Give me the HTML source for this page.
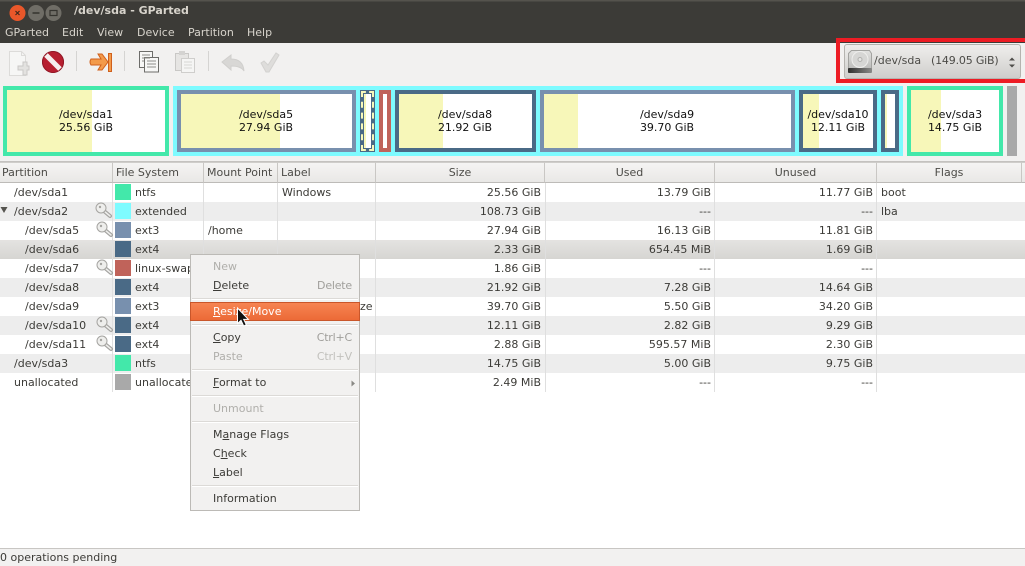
<!DOCTYPE html>
<html><head><meta charset="utf-8"><title>/dev/sda - GParted</title>
<style>
html,body{margin:0;padding:0}
body{width:1025px;height:566px;overflow:hidden;position:relative;background:#fff;font:11px/14px "DejaVu Sans",sans-serif;color:#3c3b37}
div,span{position:absolute;white-space:nowrap;box-sizing:border-box}
u{text-decoration:underline}
#title{left:0;top:0;width:1025px;height:21px;background:linear-gradient(#55534d 0,#55534d 1px,#3c3b37 2px,#3c3b37 100%)}
#menubar{left:0;top:21px;width:1025px;height:22px;background:#3c3b37}
#menubar span{top:5px;color:#d8d4cc}
#tool{left:0;top:43px;width:1025px;height:118px;background:#f2f1f0}
.p{top:86px;height:70px;border:4px solid}
.p i{position:absolute;left:0;top:0;bottom:0;background:#f7f7b9}
.g{background:#fff}
.t{color:#111;text-align:center;line-height:13px;z-index:3}
.r{left:0;width:1025px;height:19px}
.r span{top:3px}
.s{left:115px;top:1px!important;width:16px;height:16px}
.sz{text-align:right}
.h{top:162px;height:21px;background:linear-gradient(#f5f4f3,#e9e8e6);border-top:1px solid #cfcdca;border-bottom:1px solid #bdbbb8;border-right:1px solid #c9c7c4;padding-top:3px;color:#4c4b47}
.v{top:183px;width:1px;height:209px;background:#dfdfdf}
#menu{left:190px;top:254px;width:170px;height:257px;background:#f2f1f0;border:1px solid #bcbab6;z-index:5}
#menu span{left:22px;margin-top:1px}
#menu .k{left:auto;right:7px;color:#a09f9b;letter-spacing:-.2px}
#menu .d{color:#b0afab}
#menu b{position:absolute;left:1px;right:1px;height:2px;background:linear-gradient(#dcdad7 50%,#fff 50%)}
svg{position:absolute;overflow:visible}
</style></head><body>
<div id="title">
<span style="left:74px;top:4px;color:#d8d4cc;font-weight:bold;font-size:11px">/dev/sda - GParted</span>
</div>
<div id="menubar"><span style="left:5px">GParted</span><span style="left:62px">Edit</span><span style="left:97px">View</span><span style="left:137px">Device</span><span style="left:188px">Partition</span><span style="left:247px">Help</span></div>
<svg style="left:10px;top:5px;z-index:2" width="52" height="16"><circle cx="7.500" cy="8" r="8" fill="#e9572a"/><path d="M5.500 6l4 4M9.500 6l-4 4" stroke="#40281c" stroke-width="1.200"/><circle cx="26" cy="8" r="8" fill="#6f6d66"/><path d="M22.500 8h7" stroke="#35342f" stroke-width="1.500"/><circle cx="43.500" cy="8" r="8" fill="#6f6d66"/><rect x="40" y="5.500" width="7" height="5" fill="none" stroke="#35342f" stroke-width="1.200"/></svg>
<div id="tool"></div>
<svg style="left:0;top:43px" width="300" height="40">
<path d="M9.500 8.500h12l4 4v20h-16z" fill="#f6f6f5" stroke="#dcdbd9"/><path d="M21.500 8.500v4h4" fill="none" stroke="#dcdbd9"/><path d="M18 23h5v-4h4v4h2v4h-2v5h-4v-5h-5z" fill="#e3e2e0" stroke="#c9c8c6"/>
<circle cx="53" cy="19" r="11" fill="#b71f30"/><circle cx="53" cy="19" r="10.500" fill="none" stroke="#8f1826" stroke-width="1"/><path d="M46 12l14 14" stroke="#f6eeee" stroke-width="5"/>
<path d="M76.500 8v20" stroke="#d5d4d2"/>
<path d="M91 16h10l-3-5h4l6 8-6 8h-4l3-5H91q-2-3 0-6z" fill="#f39a4a" stroke="#d0601c"/><rect x="108.500" y="10.500" width="3" height="18" fill="#f39a4a" stroke="#d0601c"/>
<path d="M124.500 8v20" stroke="#d5d4d2"/>
<rect x="139.500" y="8.500" width="13" height="16" fill="#f7f7f6" stroke="#6d6d6a"/><rect x="144.500" y="14.500" width="14" height="14.500" fill="#f7f7f6" stroke="#6d6d6a"/><path d="M142 12h8M142 15h8M142 18h2M147 18h9M147 21h9M147 24h9" stroke="#8e8e8b"/>
<rect x="175.500" y="10.500" width="13" height="17" fill="#e6e5e3" stroke="#c9c8c6"/><rect x="179" y="8" width="6" height="4" fill="#d4d3d1"/><rect x="181.500" y="15.500" width="13" height="14" fill="#f5f5f4" stroke="#cfcecc"/><path d="M184 19h8M184 22h8M184 25h8" stroke="#d8d7d5"/>
<path d="M208.500 8v20" stroke="#d5d4d2"/>
<path d="M222 19l9-7v4q12 0 13 12-3-5-13-5v4z" fill="#d8d7d5" stroke="#d0cfcd"/>
<path d="M261 20l3-2 4 4 8-12 3 2-10 17h-3z" fill="#dedddb" stroke="#d3d2d0"/>
</svg>

<div style="left:836px;top:38px;width:189px;height:45px;border:4px solid #ed1c24;border-right:none;z-index:2"></div>
<div style="left:844px;top:44px;width:177px;height:35px;border:1px solid #b5b3af;border-radius:3px;background:linear-gradient(#efeeed,#cfcecc);z-index:3"></div>
<svg style="left:848px;top:50px;z-index:4" width="24" height="23"><defs><linearGradient id="st" x1="0" x2="1" y1="0" y2="0"><stop offset="0" stop-color="#2e2e2d"/><stop offset="1" stop-color="#8a8a88"/></linearGradient><linearGradient id="bd" x1="0" x2="0" y1="0" y2="1"><stop offset="0" stop-color="#e2e2e0"/><stop offset="1" stop-color="#bdbdbb"/></linearGradient></defs><path d="M3.500 .5h18l2 3v15H.500v-15z" fill="url(#bd)" stroke="#a3a3a0"/><circle cx="12" cy="9.500" r="8" fill="#d6d6d4" stroke="#eeeeec"/><circle cx="12" cy="9.500" r="2" fill="#e6e6e4" stroke="#b0b0ad"/><rect x="0" y="18" width="24" height="5" rx="1" fill="url(#st)"/></svg>
<span style="left:874px;top:54px;z-index:4;color:#4c4b47">/dev/sda</span><span style="left:931px;top:54px;z-index:4;color:#4c4b47;letter-spacing:-.18px">(149.05 GiB)</span>
<svg style="left:1007px;top:57px;z-index:4" width="10" height="12"><path d="M2 3.500L5 .5 8 3.500zM2 7.500L5 10.500 8 7.500z" fill="#4f4e4b"/></svg>

<!-- graph -->
<div class="p g" style="left:3px;width:166px;border-color:#43e8aa"><i style="width:85px"></i></div>
<div style="left:173px;top:86px;width:730px;height:70px;background:#7efbff"></div>
<div class="p g" style="left:177px;top:90px;height:62px;width:179px;border-color:#7890ae"><i style="width:99px"></i></div>
<div class="p" style="left:360px;top:90px;height:62px;width:15px;border-color:#4a6a86;background:#fff"><i style="width:2px;background:#f7f7b9"></i></div>
<div style="left:361px;top:91px;width:13px;height:60px;border:2px dashed #f7f7b9"></div>
<div class="p g" style="left:379px;top:90px;height:62px;width:12px;border-color:#c0635a"></div>
<div class="p g" style="left:395px;top:90px;height:62px;width:141px;border-color:#4a6a86"><i style="width:44px"></i></div>
<div class="p g" style="left:540px;top:90px;height:62px;width:255px;border-color:#7890ae"><i style="width:34px"></i></div>
<div class="p g" style="left:799px;top:90px;height:62px;width:78px;border-color:#4a6a86"><i style="width:16px"></i></div>
<div class="p g" style="left:881px;top:90px;height:62px;width:18px;border-color:#4a6a86"><i style="width:2px"></i></div>
<div class="p g" style="left:907px;width:96px;border-color:#43e8aa"><i style="width:30px"></i></div>
<div style="left:1007px;top:86px;width:10px;height:70px;background:#a9a9a9"></div>
<div class="t" style="left:3px;width:166px;top:108px">/dev/sda1<br>25.56 GiB</div>
<div class="t" style="left:177px;width:178px;top:108px">/dev/sda5<br>27.94 GiB</div>
<div class="t" style="left:395px;width:140px;top:108px">/dev/sda8<br>21.92 GiB</div>
<div class="t" style="left:540px;width:254px;top:108px">/dev/sda9<br>39.70 GiB</div>
<div class="t" style="left:799px;width:78px;top:108px">/dev/sda10<br>12.11 GiB</div>
<div class="t" style="left:907px;width:96px;top:108px">/dev/sda3<br>14.75 GiB</div>
<div style="left:0;top:161px;width:1025px;height:1px;background:#c4c2bf"></div>

<!-- header -->
<div class="h" style="left:0;width:113px;padding-left:2px">Partition</div>
<div class="h" style="left:113px;width:91px;padding-left:3px">File System</div>
<div class="h" style="left:204px;width:74px;padding-left:3px">Mount Point</div>
<div class="h" style="left:278px;width:98px;padding-left:3px">Label</div>
<div class="h" style="left:376px;width:169px;text-align:center">Size</div>
<div class="h" style="left:545px;width:170px;text-align:center">Used</div>
<div class="h" style="left:715px;width:162px;text-align:center">Unused</div>
<div class="h" style="left:877px;width:145px;text-align:center">Flags</div>
<div class="h" style="left:1022px;width:3px;border-right:none"></div>

<!-- rows -->
<div class="r" style="top:183px"><span style="left:14px">/dev/sda1</span><span class="s" style="background:#43e8aa"></span><span style="left:135px">ntfs</span><span style="left:282px">Windows</span><span class="sz" style="right:484px">25.56 GiB</span><span class="sz" style="right:314px">13.79 GiB</span><span class="sz" style="right:152px">11.77 GiB</span><span style="left:881px">boot</span></div>
<div class="r" style="top:202px;background:#ededed"><span style="left:14px">/dev/sda2</span><span class="s" style="background:#7efbff"></span><span style="left:135px">extended</span><span class="sz" style="right:484px">108.73 GiB</span><span class="sz" style="right:314px">---</span><span class="sz" style="right:152px">---</span><span style="left:881px">lba</span></div>
<div class="r" style="top:221px"><span style="left:25px">/dev/sda5</span><span class="s" style="background:#7890ae"></span><span style="left:135px">ext3</span><span style="left:208px">/home</span><span class="sz" style="right:484px">27.94 GiB</span><span class="sz" style="right:314px">16.13 GiB</span><span class="sz" style="right:152px">11.81 GiB</span></div>
<div class="r" style="top:240px;background:linear-gradient(#e4e3e1,#d6d5d2)"><span style="left:25px">/dev/sda6</span><span class="s" style="background:#4a6a86"></span><span style="left:135px">ext4</span><span class="sz" style="right:484px">2.33 GiB</span><span class="sz" style="right:314px">654.45 MiB</span><span class="sz" style="right:152px">1.69 GiB</span></div>
<div class="r" style="top:259px"><span style="left:25px">/dev/sda7</span><span class="s" style="background:#c0635a"></span><span style="left:135px">linux-swap</span><span class="sz" style="right:484px">1.86 GiB</span><span class="sz" style="right:314px">---</span><span class="sz" style="right:152px">---</span></div>
<div class="r" style="top:278px;background:#ededed"><span style="left:25px">/dev/sda8</span><span class="s" style="background:#4a6a86"></span><span style="left:135px">ext4</span><span class="sz" style="right:484px">21.92 GiB</span><span class="sz" style="right:314px">7.28 GiB</span><span class="sz" style="right:152px">14.64 GiB</span></div>
<div class="r" style="top:297px"><span style="left:25px">/dev/sda9</span><span class="s" style="background:#7890ae"></span><span style="left:135px">ext3</span><span style="left:360px">ze</span><span class="sz" style="right:484px">39.70 GiB</span><span class="sz" style="right:314px">5.50 GiB</span><span class="sz" style="right:152px">34.20 GiB</span></div>
<div class="r" style="top:316px;background:#ededed"><span style="left:25px">/dev/sda10</span><span class="s" style="background:#4a6a86"></span><span style="left:135px">ext4</span><span class="sz" style="right:484px">12.11 GiB</span><span class="sz" style="right:314px">2.82 GiB</span><span class="sz" style="right:152px">9.29 GiB</span></div>
<div class="r" style="top:335px"><span style="left:25px">/dev/sda11</span><span class="s" style="background:#4a6a86"></span><span style="left:135px">ext4</span><span class="sz" style="right:484px">2.88 GiB</span><span class="sz" style="right:314px">595.57 MiB</span><span class="sz" style="right:152px">2.30 GiB</span></div>
<div class="r" style="top:354px;background:#ededed"><span style="left:14px">/dev/sda3</span><span class="s" style="background:#43e8aa"></span><span style="left:135px">ntfs</span><span class="sz" style="right:484px">14.75 GiB</span><span class="sz" style="right:314px">5.00 GiB</span><span class="sz" style="right:152px">9.75 GiB</span></div>
<div class="r" style="top:373px"><span style="left:14px">unallocated</span><span class="s" style="background:#a9a9a9"></span><span style="left:135px">unallocated</span><span class="sz" style="right:484px">2.49 MiB</span><span class="sz" style="right:314px">---</span><span class="sz" style="right:152px">---</span></div>
<div class="v" style="left:112px"></div><div class="v" style="left:203px"></div><div class="v" style="left:277px"></div><div class="v" style="left:375px"></div><div class="v" style="left:545px"></div><div class="v" style="left:714px"></div><div class="v" style="left:876px"></div>

<svg style="left:0;top:183px" width="112" height="170">
<path d="M.5 24h7l-3.500 6z" fill="#55544f"/>
<g id="k1"><path d="M104 28l6 5" stroke="#a5a4a1" stroke-width="4" stroke-linecap="round"/><path d="M104 28l6 5" stroke="#eeeeec" stroke-width="1.500" stroke-linecap="round"/><circle cx="101" cy="25" r="5" fill="#eeeeec" stroke="#a5a4a1"/><circle cx="100" cy="24" r="1.200" fill="#a5a4a1"/></g>
<g><path d="M105 47l6 5" stroke="#a5a4a1" stroke-width="4" stroke-linecap="round"/><path d="M105 47l6 5" stroke="#eeeeec" stroke-width="1.500" stroke-linecap="round"/><circle cx="102" cy="44" r="5" fill="#eeeeec" stroke="#a5a4a1"/><circle cx="101" cy="43" r="1.200" fill="#a5a4a1"/></g>
<g><path d="M105 85l6 5" stroke="#a5a4a1" stroke-width="4" stroke-linecap="round"/><path d="M105 85l6 5" stroke="#eeeeec" stroke-width="1.500" stroke-linecap="round"/><circle cx="102" cy="82" r="5" fill="#eeeeec" stroke="#a5a4a1"/><circle cx="101" cy="81" r="1.200" fill="#a5a4a1"/></g>
<g><path d="M105 142l6 5" stroke="#a5a4a1" stroke-width="4" stroke-linecap="round"/><path d="M105 142l6 5" stroke="#eeeeec" stroke-width="1.500" stroke-linecap="round"/><circle cx="102" cy="139" r="5" fill="#eeeeec" stroke="#a5a4a1"/><circle cx="101" cy="138" r="1.200" fill="#a5a4a1"/></g>
<g><path d="M105 161l6 5" stroke="#a5a4a1" stroke-width="4" stroke-linecap="round"/><path d="M105 161l6 5" stroke="#eeeeec" stroke-width="1.500" stroke-linecap="round"/><circle cx="102" cy="158" r="5" fill="#eeeeec" stroke="#a5a4a1"/><circle cx="101" cy="157" r="1.200" fill="#a5a4a1"/></g>
</svg>

<!-- context menu -->
<div id="menu">
<span class="d" style="top:4px">New</span>
<span style="top:23px"><u>D</u>elete</span><span class="k" style="top:23px">Delete</span>
<b style="top:43px"></b>
<div style="left:-1px;top:47px;width:170px;height:19px;background:linear-gradient(#f68452,#ec6a37);border:1px solid #c9562a"></div>
<span style="top:49px;color:#fff"><u>R</u>esize/Move</span>
<b style="top:69px"></b>
<span style="top:75px"><u>C</u>opy</span><span class="k" style="top:75px">Ctrl+C</span>
<span class="d" style="top:94px">Paste</span><span class="k" style="top:94px;color:#c2c1bd">Ctrl+V</span>
<b style="top:114px"></b>
<span style="top:120px"><u>F</u>ormat to</span>
<svg style="left:160px;top:125px" width="5" height="7"><path d="M.5 .5l3.500 3-3.500 3z" fill="#8a8985"/></svg>
<b style="top:140px"></b>
<span class="d" style="top:146px">Unmount</span>
<b style="top:166px"></b>
<span style="top:172px">M<u>a</u>nage Flags</span>
<span style="top:191px">C<u>h</u>eck</span>
<span style="top:210px"><u>L</u>abel</span>
<b style="top:230px"></b>
<span style="top:236px">Information</span>
</div>
<svg style="left:236px;top:307px;z-index:6" width="14" height="21"><path d="M1.500 1v15.500l3.500-3.200 2.700 5.700 2.600-1.200-2.600-5.400h4.700z" fill="#111" stroke="#fff" stroke-width="1"/></svg>

<!-- status -->
<div style="left:0;top:548px;width:1025px;height:18px;background:#f2f1f0;border-top:1px solid #c8c6c3"></div>
<span style="left:0;top:551px">0 operations pending</span>
</body></html>
